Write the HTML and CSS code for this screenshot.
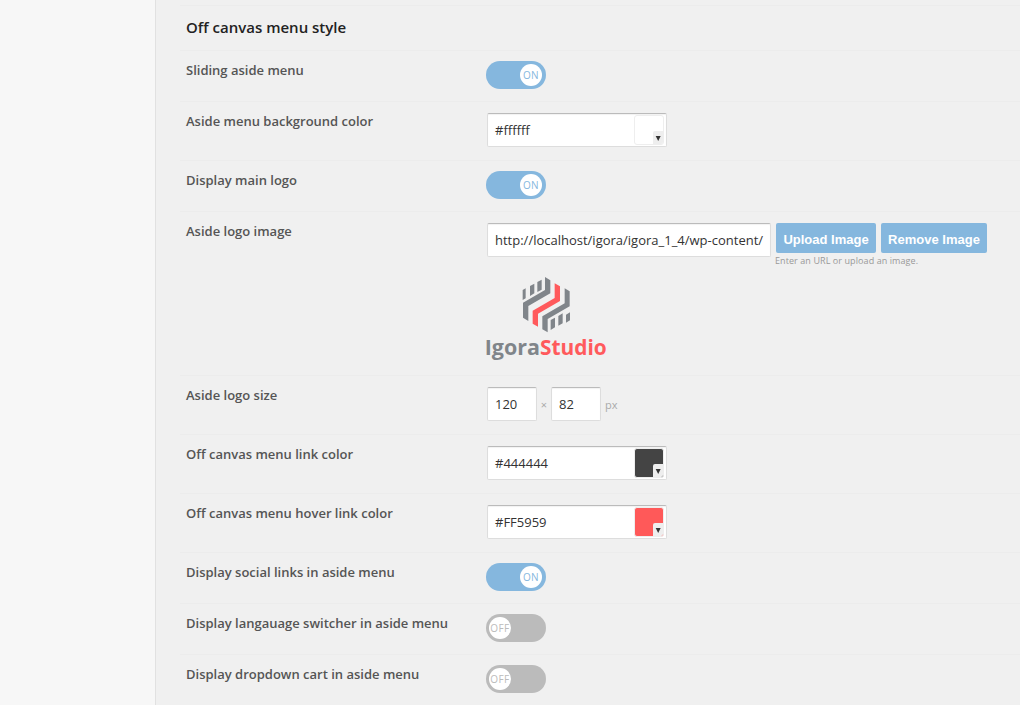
FILE: index.html
```html
<!DOCTYPE html>
<html lang="en">
<head>
<meta charset="utf-8">
<title>Theme options</title>
<link rel="stylesheet" href="styles.css">
</head>
<body>
<aside class="sidebar"></aside>
<main class="panel">
  <section class="row heading"><h2>Off canvas menu style</h2></section>
  <section class="row"><h3>Sliding aside menu</h3><div class="field"><span class="switch on"><span class="knob">ON</span></span></div></section>
  <section class="row tall"><h3>Aside menu background color</h3><div class="field"><div class="input color"><span>#ffffff</span><i class="swatch white"><svg class="arrow" viewBox="0 0 10 13"><path d="M2.7 5h5L5.2 10z"/></svg></i></div></div></section>
  <section class="row"><h3>Display main logo</h3><div class="field"><span class="switch on"><span class="knob">ON</span></span></div></section>
  <section class="row image"><h3>Aside logo image</h3>
    <div class="field">
      <div class="upload">
        <div class="input url"><span>http://localhost/igora/igora_1_4/wp-content/</span></div>
        <div class="actions">
          <div class="buttons"><button class="b1">Upload Image</button><button class="b2">Remove Image</button></div>
          <p class="hint">Enter an URL or upload an image.</p>
        </div>
      </div>
      <svg class="logo" viewBox="48 21 360 255">
        <g class="grey">
          <path d="M225 21L241 31V70L175 108V153L159 143V98L225 60Z"/>
          <path d="M284 55L299 64V109L233 147V187L217 178V139L284 100Z"/>
          <path d="M158 60L167 55V85L158 90ZM180 48L193 41V70L180 78ZM202 36L215 29V59L202 66Z"/>
          <path d="M242 150L255 143V172L242 180ZM265 138L278 130V160L265 167ZM288 134L300 127V151L288 158Z"/>
        </g>
        <path class="red" d="M254 40L270 49V93L204 131V170L188 161V122L254 84Z"/>
        <text class="grey" x="44" y="254" textLength="166" lengthAdjust="spacingAndGlyphs">Igora</text>
        <text class="red" x="210" y="254" textLength="200" lengthAdjust="spacingAndGlyphs">Studio</text>
      </svg>
    </div>
  </section>
  <section class="row tall"><h3>Aside logo size</h3><div class="field size"><div class="input num">120</div><span class="times">×</span><div class="input num">82</div><span class="px">px</span></div></section>
  <section class="row tall"><h3>Off canvas menu link color</h3><div class="field"><div class="input color"><span>#444444</span><i class="swatch dark"><svg class="arrow" viewBox="0 0 10 13"><path d="M2.7 5h5L5.2 10z"/></svg></i></div></div></section>
  <section class="row tall"><h3>Off canvas menu hover link color</h3><div class="field"><div class="input color"><span>#FF5959</span><i class="swatch coral"><svg class="arrow" viewBox="0 0 10 13"><path d="M2.7 5h5L5.2 10z"/></svg></i></div></div></section>
  <section class="row"><h3>Display social links in aside menu</h3><div class="field"><span class="switch on"><span class="knob">ON</span></span></div></section>
  <section class="row"><h3>Display langauage switcher in aside menu</h3><div class="field"><span class="switch"><span class="knob">OFF</span></span></div></section>
  <section class="row"><h3>Display dropdown cart in aside menu</h3><div class="field"><span class="switch"><span class="knob">OFF</span></span></div></section>
</main>
</body>
</html>
```
FILE: styles.css
```css
* { box-sizing: border-box; }
body {
  margin: 0;
  display: flex;
  height: 705px;
  overflow: hidden;
  background: #f0f0f0;
  font-family: "Open Sans", "Noto Sans", sans-serif;
  color: #333;
}
.sidebar { width: 156px; flex: none; background: #f7f7f7; border-right: 1px solid #e1e1e1; }
.panel { flex: 1; min-width: 0; padding: 5px 0 0 24px; }
.row {
  display: flex;
  height: 51px;
  padding-left: 6px;
  border-top: 1px solid #ececec;
}
.tall { height: 59px; }
.image { height: 164px; }
.heading { height: 45px; }
h2, h3 { margin: 0; white-space: nowrap; }
h2 { font-size: 15px; line-height: 20px; font-weight: 600; color: #222; padding-top: 11px; }
h3 { width: 300px; flex: none; font-size: 13px; line-height: 18px; font-weight: 600; color: #555; padding-top: 10px; }
.field { padding-top: 10px; }
.tall .field, .image .field { padding: 11px 0 0 1px; }
.switch {
  display: flex;
  width: 60px;
  height: 28px;
  padding: 3px 4px 3px 3px;
  border-radius: 14px;
  background: #bbb;
}
.switch.on { background: #85b7de; justify-content: flex-end; }
.knob {
  width: 22px;
  height: 22px;
  border-radius: 50%;
  background: #fff;
  color: #bbb;
  font-size: 10px;
  letter-spacing: 0.4px;
  line-height: 23px;
  display: flex;
  justify-content: center;
}
.on .knob { color: #85b7de; }
.input {
  display: flex;
  height: 34px;
  background: #fff;
  border: 1px solid #ddd;
  border-top-color: #bbb;
  border-radius: 2px;
  padding: 0 2px 0 7px;
  font-size: 13px;
  line-height: 33px;
  box-shadow: inset 0 1px 1px #f2f2f2;
}
.color { width: 180px; justify-content: space-between; align-items: center; }
.swatch {
  display: flex;
  width: 30px;
  height: 30px;
  justify-content: flex-end;
  align-items: flex-end;
  border: 1px solid #eee;
  border-radius: 3px;
  overflow: hidden;
}
.arrow { width: 10px; height: 13px; background: #eee; border-radius: 2px 0 0 0; fill: #333; }
.white { background: #fff; }
.dark { background: #444; }
.coral { background: #ff5959; }
.upload { display: flex; }
.url { width: 284px; }
.actions { padding-left: 5px; }
.buttons { display: flex; gap: 5px; }
button {
  height: 30px;
  padding: 2px 0 0;
  border: 0;
  border-radius: 2px;
  background: #85b7de;
  color: #fff;
  font: bold 13px "Liberation Sans", Arial, sans-serif;
  white-space: nowrap;
}
.b1 { width: 100px; }
.b2 { width: 106px; }
.hint { margin: 1px 0 0 -1px; font-size: 9px; letter-spacing: 0.08px; line-height: 14px; color: #999; height: 14px; }
.logo { display: block; width: 120px; height: 85px; margin: 9px 0 0 -1px; overflow: visible; }
.logo text { font-weight: 700; font-size: 62px; }
.grey { fill: #80858a; }
.red { fill: #ff5a5c; }
.size { display: flex; }
.num { width: 50px; }
.times, .px { color: #aaa; font-size: 11px; line-height: 36px; }
.times { width: 14px; text-align: center; }
.px { padding-left: 4px; }
```
